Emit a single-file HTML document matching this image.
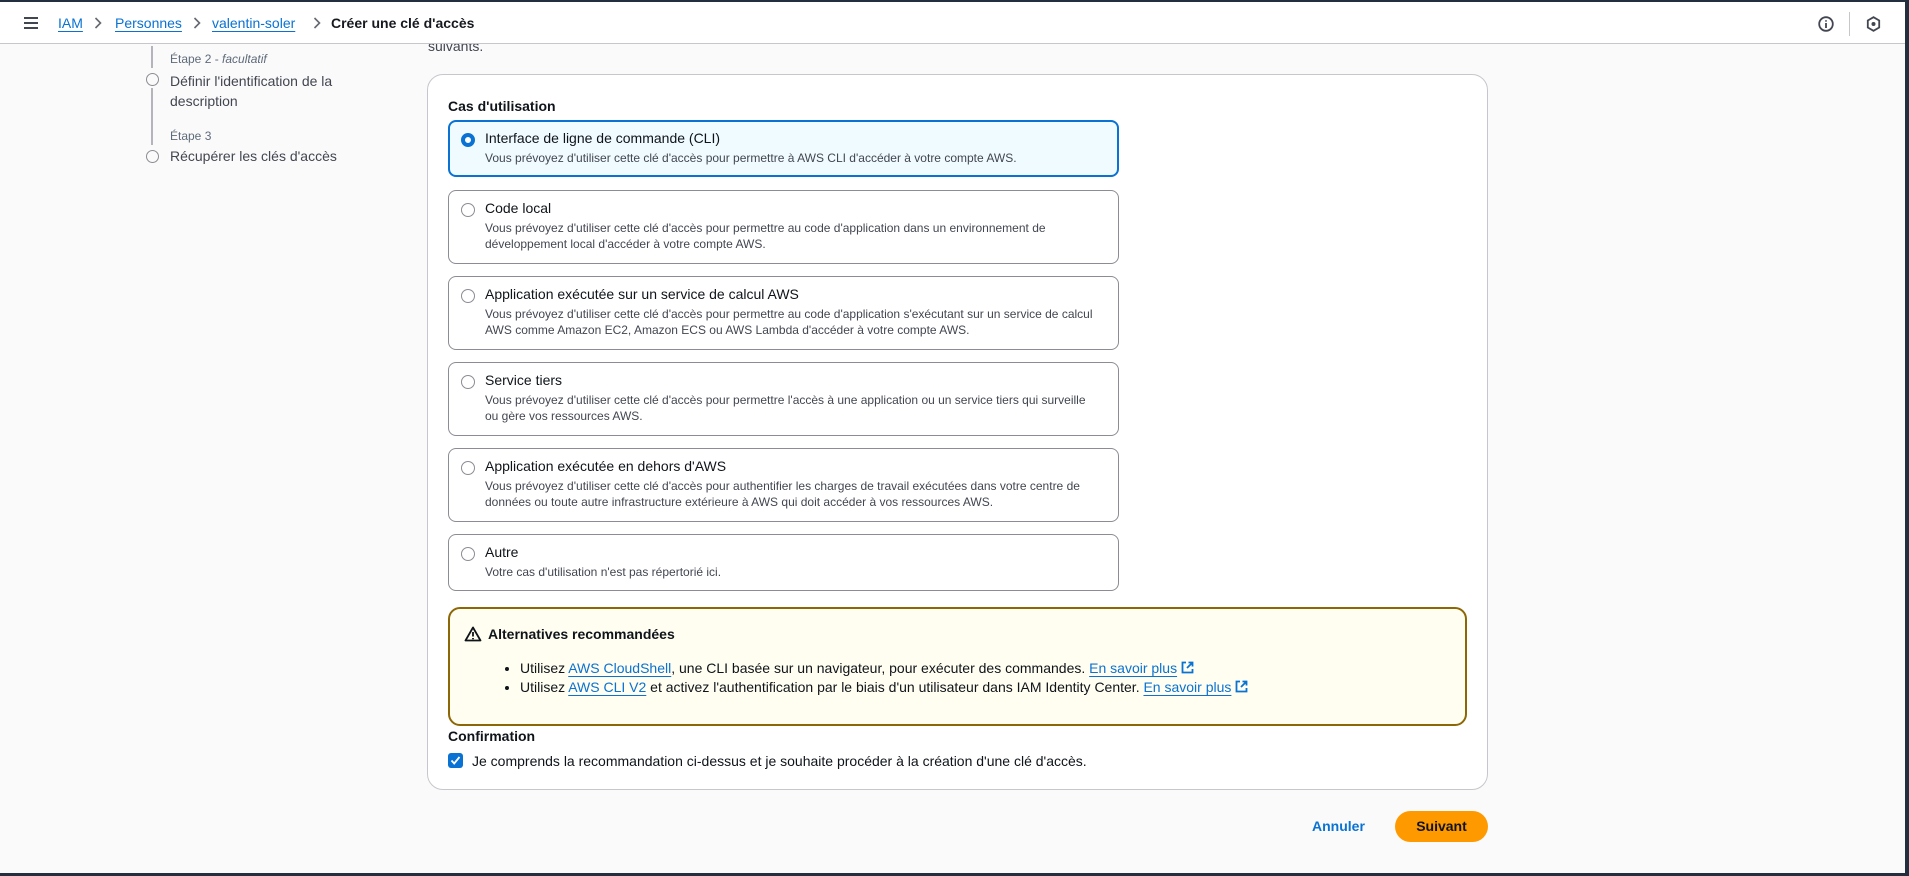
<!DOCTYPE html>
<html><head><meta charset="utf-8"><style>
*{box-sizing:border-box;margin:0;padding:0}
body{width:1909px;height:876px;overflow:hidden;background:#232f3e;font-family:"Liberation Sans",sans-serif;color:#0f141a;position:relative}
#page{position:absolute;left:0;top:2px;width:1905px;height:871px;background:#fafafa;overflow:hidden}
.hdr{position:absolute;left:0;top:0;width:1905px;height:42px;background:#fff;border-bottom:1px solid #c6c6cd}
.abs{position:absolute;white-space:nowrap}
.lnk{color:#0972d3;text-decoration:underline;text-underline-offset:3px}
.bc{font-size:14px;top:13px}
.sep{top:15px}
.nav{font-size:14px;color:#424650}
.step{font-size:12px;color:#5f6b7a}
.card{position:absolute;left:427px;top:72px;width:1061px;height:716px;background:#fff;border:1px solid #c6c6cd;border-radius:16px}
.opt{position:absolute;left:448px;width:671px;border:1px solid #8c8c94;border-radius:8px;background:#fff}
.opt .r{position:absolute;left:12px;top:12px;width:14px;height:14px;border:1.5px solid #8c8c94;border-radius:50%;background:#fff}
.opt .t{position:absolute;left:36px;top:9px;font-size:14px;white-space:nowrap}
.opt .d{position:absolute;left:36px;top:29px;font-size:12px;line-height:16px;color:#424650;white-space:nowrap}
.sel{border:2px solid #0972d3;background:#f0fbff}
.sel .r{left:11px;top:11px;border:4px solid #0972d3}
.sel .t{left:35px;top:8px}.sel .d{left:35px;top:28px}
.warn{position:absolute;left:448px;top:605px;width:1019px;height:119px;border:2px solid #8d6605;border-radius:12px;background:#fffef0}
.warn li{font-size:14px;line-height:19px}
.btn{position:absolute;left:1395px;top:809px;width:93px;height:31px;background:#ff9900;border-radius:16px;font-weight:bold;font-size:14px;text-align:center;line-height:31px}
</style></head><body>
<div id="page">
<div class="abs" style="left:428px;top:36px;font-size:14px;color:#424650">suivants.</div>
<div class="abs" style="left:151px;top:44px;width:2px;height:22px;background:#b4b4bb"></div>
<div class="abs" style="left:151px;top:86px;width:2px;height:57px;background:#b4b4bb"></div>
<div class="abs step" style="left:170px;top:50px">Étape 2 - <i>facultatif</i></div>
<div class="abs" style="left:146px;top:71px;width:13px;height:13px;border:1.5px solid #8c8c94;border-radius:50%"></div>
<div class="abs nav" style="left:170px;top:69px;line-height:20px">Définir l'identification de la<br>description</div>
<div class="abs step" style="left:170px;top:127px">Étape 3</div>
<div class="abs" style="left:146px;top:148px;width:13px;height:13px;border:1.5px solid #8c8c94;border-radius:50%"></div>
<div class="abs nav" style="left:170px;top:146px">Récupérer les clés d'accès</div>

<div class="card"></div>
<div class="abs" style="left:448px;top:96px;font-size:14px;font-weight:bold">Cas d'utilisation</div>

<div class="opt sel" style="top:118px;height:57px"><div class="r"></div><div class="t">Interface de ligne de commande (CLI)</div><div class="d">Vous prévoyez d'utiliser cette clé d'accès pour permettre à AWS CLI d'accéder à votre compte AWS.</div></div>
<div class="opt" style="top:188px;height:74px"><div class="r"></div><div class="t">Code local</div><div class="d">Vous prévoyez d'utiliser cette clé d'accès pour permettre au code d'application dans un environnement de<br>développement local d'accéder à votre compte AWS.</div></div>
<div class="opt" style="top:274px;height:74px"><div class="r"></div><div class="t">Application exécutée sur un service de calcul AWS</div><div class="d">Vous prévoyez d'utiliser cette clé d'accès pour permettre au code d'application s'exécutant sur un service de calcul<br>AWS comme Amazon EC2, Amazon ECS ou AWS Lambda d'accéder à votre compte AWS.</div></div>
<div class="opt" style="top:360px;height:74px"><div class="r"></div><div class="t">Service tiers</div><div class="d">Vous prévoyez d'utiliser cette clé d'accès pour permettre l'accès à une application ou un service tiers qui surveille<br>ou gère vos ressources AWS.</div></div>
<div class="opt" style="top:446px;height:74px"><div class="r"></div><div class="t">Application exécutée en dehors d'AWS</div><div class="d">Vous prévoyez d'utiliser cette clé d'accès pour authentifier les charges de travail exécutées dans votre centre de<br>données ou toute autre infrastructure extérieure à AWS qui doit accéder à vos ressources AWS.</div></div>
<div class="opt" style="top:532px;height:57px"><div class="r"></div><div class="t">Autre</div><div class="d">Votre cas d'utilisation n'est pas répertorié ici.</div></div>

<div class="warn">
 <svg class="abs" style="left:14px;top:17px" width="18" height="16" viewBox="0 0 18 16"><path d="M9 1.5L1.5 14.5h15z" fill="none" stroke="#0f141a" stroke-width="1.8" stroke-linejoin="round"/><path d="M9 6v4.5M9 12v1.2" stroke="#0f141a" stroke-width="1.8"/></svg>
 <div class="abs" style="left:38px;top:17px;font-size:14px;font-weight:bold">Alternatives recommandées</div>
 <ul class="abs" style="left:70px;top:50px;list-style:disc">
  <li>Utilisez <span class="lnk">AWS CloudShell</span>, une CLI basée sur un navigateur, pour exécuter des commandes. <span class="lnk">En savoir plus</span> <svg width="13" height="13" viewBox="0 0 13 13" style="vertical-align:-1px"><path d="M5 1.5H1.5v10h10V8M7.5 1.5h4v4M11.5 1.5L6 7" fill="none" stroke="#0972d3" stroke-width="1.8"/></svg></li>
  <li>Utilisez <span class="lnk">AWS CLI V2</span> et activez l'authentification par le biais d'un utilisateur dans IAM Identity Center. <span class="lnk">En savoir plus</span> <svg width="13" height="13" viewBox="0 0 13 13" style="vertical-align:-1px"><path d="M5 1.5H1.5v10h10V8M7.5 1.5h4v4M11.5 1.5L6 7" fill="none" stroke="#0972d3" stroke-width="1.8"/></svg></li>
 </ul>
</div>
<div class="abs" style="left:448px;top:726px;font-size:14px;font-weight:bold">Confirmation</div>
<div class="abs" style="left:448px;top:751px;width:15px;height:15px;background:#0972d3;border-radius:3px"><svg width="15" height="15" viewBox="0 0 15 15"><path d="M3.5 7.5l2.7 3L11.5 4" fill="none" stroke="#fff" stroke-width="1.8"/></svg></div>
<div class="abs" style="left:472px;top:751px;font-size:14px">Je comprends la recommandation ci-dessus et je souhaite procéder à la création d'une clé d'accès.</div>

<div class="abs" style="left:1312px;top:816px;font-size:14px;font-weight:bold;color:#0972d3">Annuler</div>
<div class="btn">Suivant</div>

<div class="hdr">
 <svg class="abs" style="left:23px;top:14px" width="16" height="14" viewBox="0 0 16 14"><path d="M1 2h14M1 7h14M1 12h14" stroke="#424650" stroke-width="2"/></svg>
 <div class="abs bc lnk" style="left:58px">IAM</div>
 <svg class="abs sep" style="left:94px" width="8" height="12" viewBox="0 0 8 12"><path d="M1.5 1l5 5-5 5" fill="none" stroke="#656871" stroke-width="1.6"/></svg>
 <div class="abs bc lnk" style="left:115px">Personnes</div>
 <svg class="abs sep" style="left:193px" width="8" height="12" viewBox="0 0 8 12"><path d="M1.5 1l5 5-5 5" fill="none" stroke="#656871" stroke-width="1.6"/></svg>
 <div class="abs bc lnk" style="left:212px">valentin-soler</div>
 <svg class="abs sep" style="left:313px" width="8" height="12" viewBox="0 0 8 12"><path d="M1.5 1l5 5-5 5" fill="none" stroke="#656871" stroke-width="1.6"/></svg>
 <div class="abs bc" style="left:331px;font-weight:bold;color:#16191f">Créer une clé d'accès</div>
 <svg class="abs" style="left:1818px;top:14px" width="16" height="16" viewBox="0 0 16 16"><circle cx="8" cy="8" r="6.8" fill="none" stroke="#424650" stroke-width="1.8"/><path d="M8 7v5M8 4.2v1.4" stroke="#424650" stroke-width="1.8"/></svg>
 <div class="abs" style="left:1849px;top:10px;width:1px;height:24px;background:#c6c6cd"></div>
 <svg class="abs" style="left:1866px;top:14px" width="15" height="16" viewBox="0 0 15 16"><path d="M7.5 1.2L13.2 4.5v7L7.5 14.8 1.8 11.5v-7z" fill="none" stroke="#424650" stroke-width="1.8"/><circle cx="7.5" cy="8" r="2" fill="#424650"/></svg>
</div>
</div>
</body></html>
